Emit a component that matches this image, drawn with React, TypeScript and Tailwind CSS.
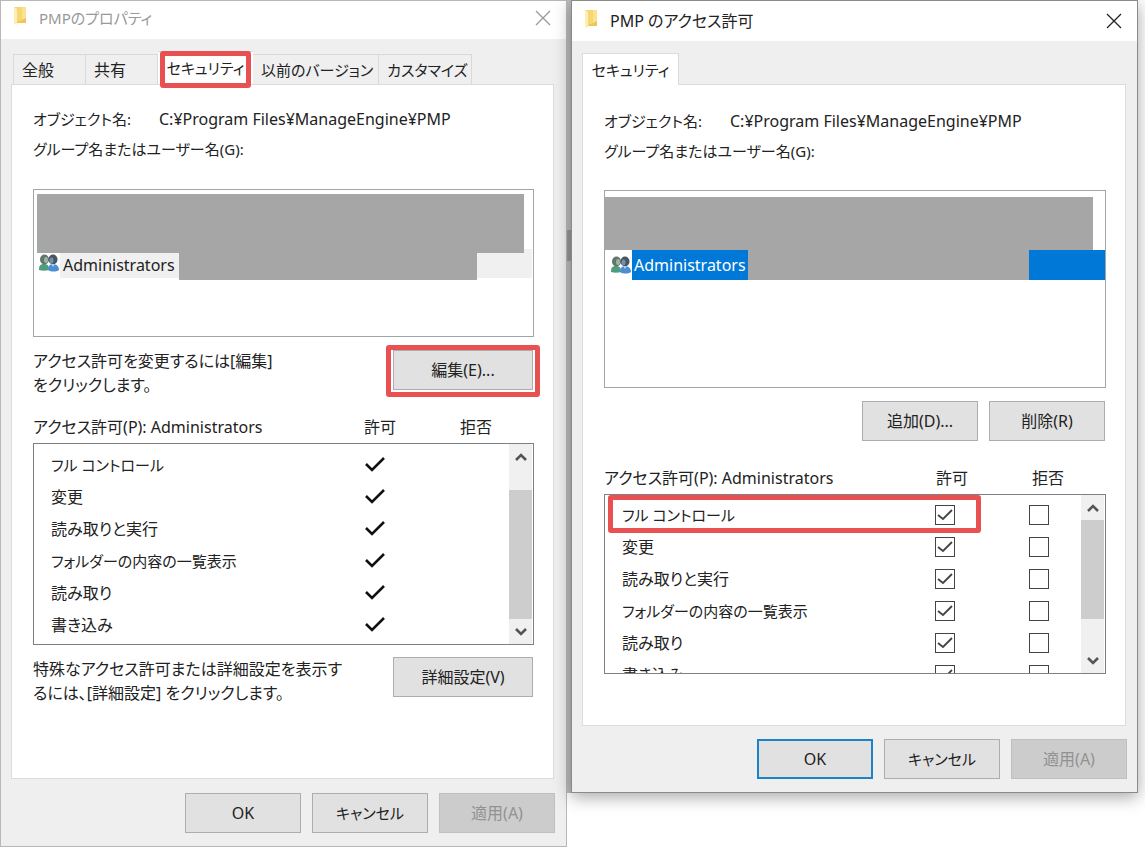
import React from 'react';
import clsx from 'clsx';

const permissions = [
  { name: 'フル コントロール', size: 'text-[15px]' },
  { name: '変更' },
  { name: '読み取りと実行' },
  { name: 'フォルダーの内容の一覧表示', size: 'text-[15px]' },
  { name: '読み取り' },
  { name: '書き込み' },
];

function FolderIcon() {
  return (
    <svg viewBox="0 0 14 20" className="w-[14px] h-[20px] mb-1" aria-hidden="true">
      <path d="M1 1h8l4 1v15H4L1 18z" fill="#f7d774" />
      <path d="M1 1l3 2v16l-3-1z" fill="#fdeeb5" />
      <path d="M9 1h4v11l-4 2z" fill="#fbe28c" />
      <path d="M9 14l4-2v5H4v-1z" fill="#edc55c" />
    </svg>
  );
}

function GroupIcon() {
  return (
    <svg viewBox="0 0 22 20" className="w-[22px] h-[20px] shrink-0" aria-hidden="true">
      <path d="M1 17c0-4 1-6 5-6s5 2 5 6c-3 1-7 1-10 0z" fill="#4f9d7c" />
      <ellipse cx="6.5" cy="6.5" rx="4.5" ry="5" fill="#64756d" />
      <ellipse cx="8" cy="7" rx="2" ry="3" fill="#9db3a3" />
      <path d="M10 17c0-4 2-6 5-6s6 2 6 6c-3 2-8 2-11 0z" fill="#4d8ed0" />
      <ellipse cx="15" cy="6.5" rx="4.5" ry="5" fill="#435566" />
      <ellipse cx="13.5" cy="7.5" rx="2" ry="3" fill="#7890a0" />
      <path d="M13 11l2 3 2-3z" fill="#a9cdec" />
    </svg>
  );
}

function CloseIcon() {
  return (
    <svg viewBox="0 0 16 16" className="w-4 h-4" fill="none" stroke="currentColor" strokeWidth="1.3" aria-hidden="true">
      <path d="M1 1l14 14M15 1L1 15" />
    </svg>
  );
}

function TitleBar({ title, active }: { title: string; active?: boolean }) {
  return (
    <header
      className={clsx(
        'flex items-center bg-white pl-3 pr-[15px] leading-6',
        active ? 'h-10 text-base text-[#222]' : 'h-[38px] pb-1 text-[15px] text-[#999]'
      )}
    >
      <FolderIcon />
      <h1 className="flex-1 pl-3">{title}</h1>
      <button type="button" aria-label="閉じる"><CloseIcon /></button>
    </header>
  );
}

type ButtonProps = { children: React.ReactNode; wide?: boolean; primary?: boolean; disabled?: boolean };

function DialogButton({ children, wide, primary, disabled }: ButtonProps) {
  return (
    <button
      type="button"
      disabled={disabled}
      className={clsx(
        'h-10 shrink-0 leading-6',
        children === 'キャンセル' ? 'text-[15px]' : 'text-base',
        wide ? 'w-[140px]' : 'w-[116px]',
        primary ? 'border-2 border-[#2080c8]' : 'border',
        !primary && (disabled ? 'border-[#bfbfbf]' : 'border-[#adadad]'),
        disabled ? 'bg-[#cccccc] text-[#929292]' : 'bg-[#e1e1e1]'
      )}
    >
      {children}
    </button>
  );
}

// red frame drawn over the thing the reader should click
function Highlight({ className }: { className: string }) {
  return <span className={clsx('absolute z-10 pointer-events-none rounded-[3px] border-[#e85052]', className)} />;
}

function ObjectInfo() {
  return (
    <dl className="text-[15px] leading-[30px]">
      <div className="flex">
        <dt className="w-[126px]">オブジェクト名:</dt>
        <dd className="text-base leading-[30px]">C:¥Program Files¥ManageEngine¥PMP</dd>
      </div>
      <dt>グループ名またはユーザー名(G):</dt>
    </dl>
  );
}

function Chevron({ down }: { down?: boolean }) {
  return (
    <svg viewBox="0 0 12 8" className="w-3 h-2" fill="none" stroke="#555" strokeWidth="2.6" aria-hidden="true">
      <path d={down ? 'M1 1l5 5 5-5' : 'M1 7l5-5 5 5'} />
    </svg>
  );
}

function ScrollBar({ atEnd }: { atEnd?: boolean }) {
  return (
    <div className="flex flex-col w-[23px] bg-[#f0f0f0]">
      <button type="button" aria-label="上へ" className="h-[25px] flex items-center justify-center"><Chevron /></button>
      {atEnd && <div className="h-[21px]" />}
      <div className={clsx('bg-[#cdcdcd]', atEnd ? 'flex-1' : 'h-[99px]')} />
      {!atEnd && <div className="flex-1" />}
      <button type="button" aria-label="下へ" className="h-[25px] flex items-center justify-center"><Chevron down /></button>
    </div>
  );
}

function PermissionHeader() {
  return (
    <div className="flex text-base leading-6">
      <span className="flex-1">アクセス許可(P): Administrators</span>
      <span className="w-24">許可</span>
      <span className="w-[74px]">拒否</span>
    </div>
  );
}

function CheckMark() {
  return (
    <svg viewBox="0 0 20 16" className="w-5 h-4" fill="none" stroke="#111" strokeWidth="2.6" role="img" aria-label="許可">
      <path d="M1 7l6 6L19 1" />
    </svg>
  );
}

function CheckBox({ label, checked }: { label: string; checked?: boolean }) {
  return (
    <span className="grid w-5 h-5">
      <input
        type="checkbox"
        aria-label={label}
        defaultChecked={checked}
        className="peer col-start-1 row-start-1 appearance-none w-5 h-5 border border-[#444] bg-white"
      />
      <svg
        viewBox="0 0 20 20"
        className="col-start-1 row-start-1 w-5 h-5 pointer-events-none invisible peer-checked:visible"
        fill="none"
        stroke="#444"
        strokeWidth="1.8"
        aria-hidden="true"
      >
        <path d="M3 10l5 4 9-9" />
      </svg>
    </span>
  );
}

function PermissionTable({ editable }: { editable?: boolean }) {
  return (
    <table className="flex-1 table-fixed text-base leading-6" aria-label="アクセス許可">
      <tbody>
        {permissions.map(({ name, size }) => (
          <tr key={name} className="h-8">
            <th scope="row" className={clsx('p-0 pl-[17px] text-left font-normal', size)}>{name}</th>
            <td className={clsx('p-0', editable ? 'w-[94px]' : 'w-24')}>
              {editable ? <CheckBox label={`${name} 許可`} checked /> : <CheckMark />}
            </td>
            <td className={clsx('p-0', editable ? 'w-[52px]' : 'w-12')}>
              {editable && <CheckBox label={`${name} 拒否`} />}
            </td>
          </tr>
        ))}
      </tbody>
    </table>
  );
}

const tabs = [
  { name: '全般', width: 'w-[73px]', size: 'text-base' },
  { name: '共有', width: 'w-[72px]', size: 'text-base' },
  { name: 'セキュリティ', width: 'w-[95px]', size: 'text-[15px]', active: true },
  { name: '以前のバージョン', width: 'w-[126px]', size: 'text-[15px]' },
  { name: 'カスタマイズ', width: 'w-[93px]', size: 'text-[15px]' },
];

function PropertiesWindow() {
  return (
    <section className="flex-1 min-w-0 border border-[#b8b8b8] bg-[#efefef]">
      <TitleBar title="PMPのプロパティ" />
      <div className="pl-[10px] pr-3 pt-3">
        <div role="tablist" className="flex items-end h-[33px] pl-[2px]">
          {tabs.map((tab) => (
            <button
              key={tab.name}
              type="button"
              role="tab"
              aria-selected={!!tab.active}
              className={clsx(
                'relative border-[#d9d9d9] leading-6 whitespace-nowrap',
                tab.width,
                tab.size,
                tab.active
                  ? 'h-[33px] bg-white border-t'
                  : 'h-[30px] border-t border-r first:border-l text-left pl-2'
              )}
            >
              {tab.name}
              {tab.active && <Highlight className="inset-x-[2px] -top-px h-[37px] border-[5px]" />}
            </button>
          ))}
        </div>
        <div className="h-[695px] border border-[#dcdcdc] bg-white pl-[21px] pr-[19px] pt-[19px]">
          <ObjectInfo />
          <div role="listbox" aria-label="グループ名またはユーザー名" className="mt-[25px] h-[148px] border border-[#a0a5aa] pt-1 pr-px">
            <div className="flex items-end pl-[3px]">
              <div className="flex-1 h-[59px] bg-[#a6a6a6]" />
              <div className="w-2 h-1 bg-[#f0f0f0]" />
            </div>
            <div role="option" aria-selected="true" className="flex h-[27px] pl-1">
              <GroupIcon />
              <span className="h-[25px] pl-[3px] pr-1 bg-[#f0f0f0] text-base leading-6">Administrators</span>
              <div className="flex-1 bg-[#a6a6a6]" />
              <div className="w-[55px] h-[25px] bg-[#f0f0f0]" />
            </div>
          </div>
          <div className="mt-3 flex justify-between">
            <p className="text-base leading-6">アクセス許可を変更するには[編集]<br />をクリックします。</p>
            <div className="relative mt-px mr-px">
              <DialogButton wide>編集(E)...</DialogButton>
              <Highlight className="-inset-x-[7px] -top-[5px] h-[52px] border-[5px]" />
            </div>
          </div>
          <div className="mt-[18px]">
            <PermissionHeader />
          </div>
          <div className="mt-1 flex h-[202px] border border-[#7d8085] pr-px">
            <div className="flex flex-1 items-start pt-[5px]">
              <PermissionTable />
            </div>
            <ScrollBar atEnd />
          </div>
          <div className="mt-3 flex justify-between pr-px">
            <p className="text-base leading-6">特殊なアクセス許可または詳細設定を表示す<br />るには、[詳細設定] をクリックします。</p>
            <DialogButton wide>詳細設定(V)</DialogButton>
          </div>
        </div>
      </div>
      <footer className="flex justify-end gap-[11px] pr-[11px] pt-[14px] pb-[13px]">
        <DialogButton>OK</DialogButton>
        <DialogButton>キャンセル</DialogButton>
        <DialogButton disabled>適用(A)</DialogButton>
      </footer>
    </section>
  );
}

function PermissionsWindow() {
  return (
    <section className="relative flex-1 min-w-0 border border-[#8a8a8a] bg-[#efefef] shadow-[0_4px_16px_rgba(0,0,0,0.35)]">
      <TitleBar title="PMP のアクセス許可" active />
      <div className="pl-[10px] pr-[11px] pt-3">
        <div role="tablist" className="flex h-8">
          <button type="button" role="tab" aria-selected="true" className="w-[97px] border border-b-0 border-[#dcdcdc] bg-white text-[15px] leading-6">
            セキュリティ
          </button>
          <div className="flex-1 border-b border-[#dcdcdc]" />
        </div>
        <div className="h-[641px] border border-t-0 border-[#dcdcdc] bg-white pl-[21px] pr-[19px] pt-[21px]">
          <ObjectInfo />
          <div role="listbox" aria-label="グループ名またはユーザー名" className="mt-6 h-[198px] border border-[#a0a5aa] pt-[6px]">
            <div className="mr-3 h-[53px] bg-[#a6a6a6]" />
            <div role="option" aria-selected="true" className="flex h-[30px] pl-[5px]">
              <div className="flex items-center"><GroupIcon /></div>
              <span className="pl-[2px] pr-[2px] bg-[#0078d7] text-white text-base leading-[30px]">Administrators</span>
              <div className="flex-1 bg-[#a6a6a6]" />
              <div className="w-[76px] bg-[#0078d7]" />
            </div>
          </div>
          <div className="mt-[13px] flex justify-end gap-[11px] pr-px">
            <DialogButton>追加(D)...</DialogButton>
            <DialogButton>削除(R)</DialogButton>
          </div>
          <div className="mt-[25px]">
            <PermissionHeader />
          </div>
          <div className="relative mt-1 h-[180px]">
            <div className="flex h-full border border-[#7d8085] pr-px">
              <div className="flex flex-1 items-start overflow-hidden pt-1">
                <PermissionTable editable />
              </div>
              <ScrollBar />
            </div>
            <Highlight className="left-1 right-[125px] top-[1px] h-[38px] border-[5px]" />
          </div>
        </div>
      </div>
      <footer className="flex justify-end gap-[11px] pr-[10px] py-[13px]">
        <DialogButton primary>OK</DialogButton>
        <DialogButton>キャンセル</DialogButton>
        <DialogButton disabled>適用(A)</DialogButton>
      </footer>
    </section>
  );
}

export default function App() {
  return (
    <main
      lang="ja"
      className="flex items-start bg-white pr-[7px] text-[#222] font-['Noto_Sans','Noto_Sans_CJK_JP',sans-serif] [font-feature-settings:'palt'] overflow-hidden"
    >
      <PropertiesWindow />
      <div className="w-1 h-[793px] bg-[#bdbdbd] pt-[230px]">
        <div className="h-[31px] bg-[#999]" />
      </div>
      <PermissionsWindow />
    </main>
  );
}
